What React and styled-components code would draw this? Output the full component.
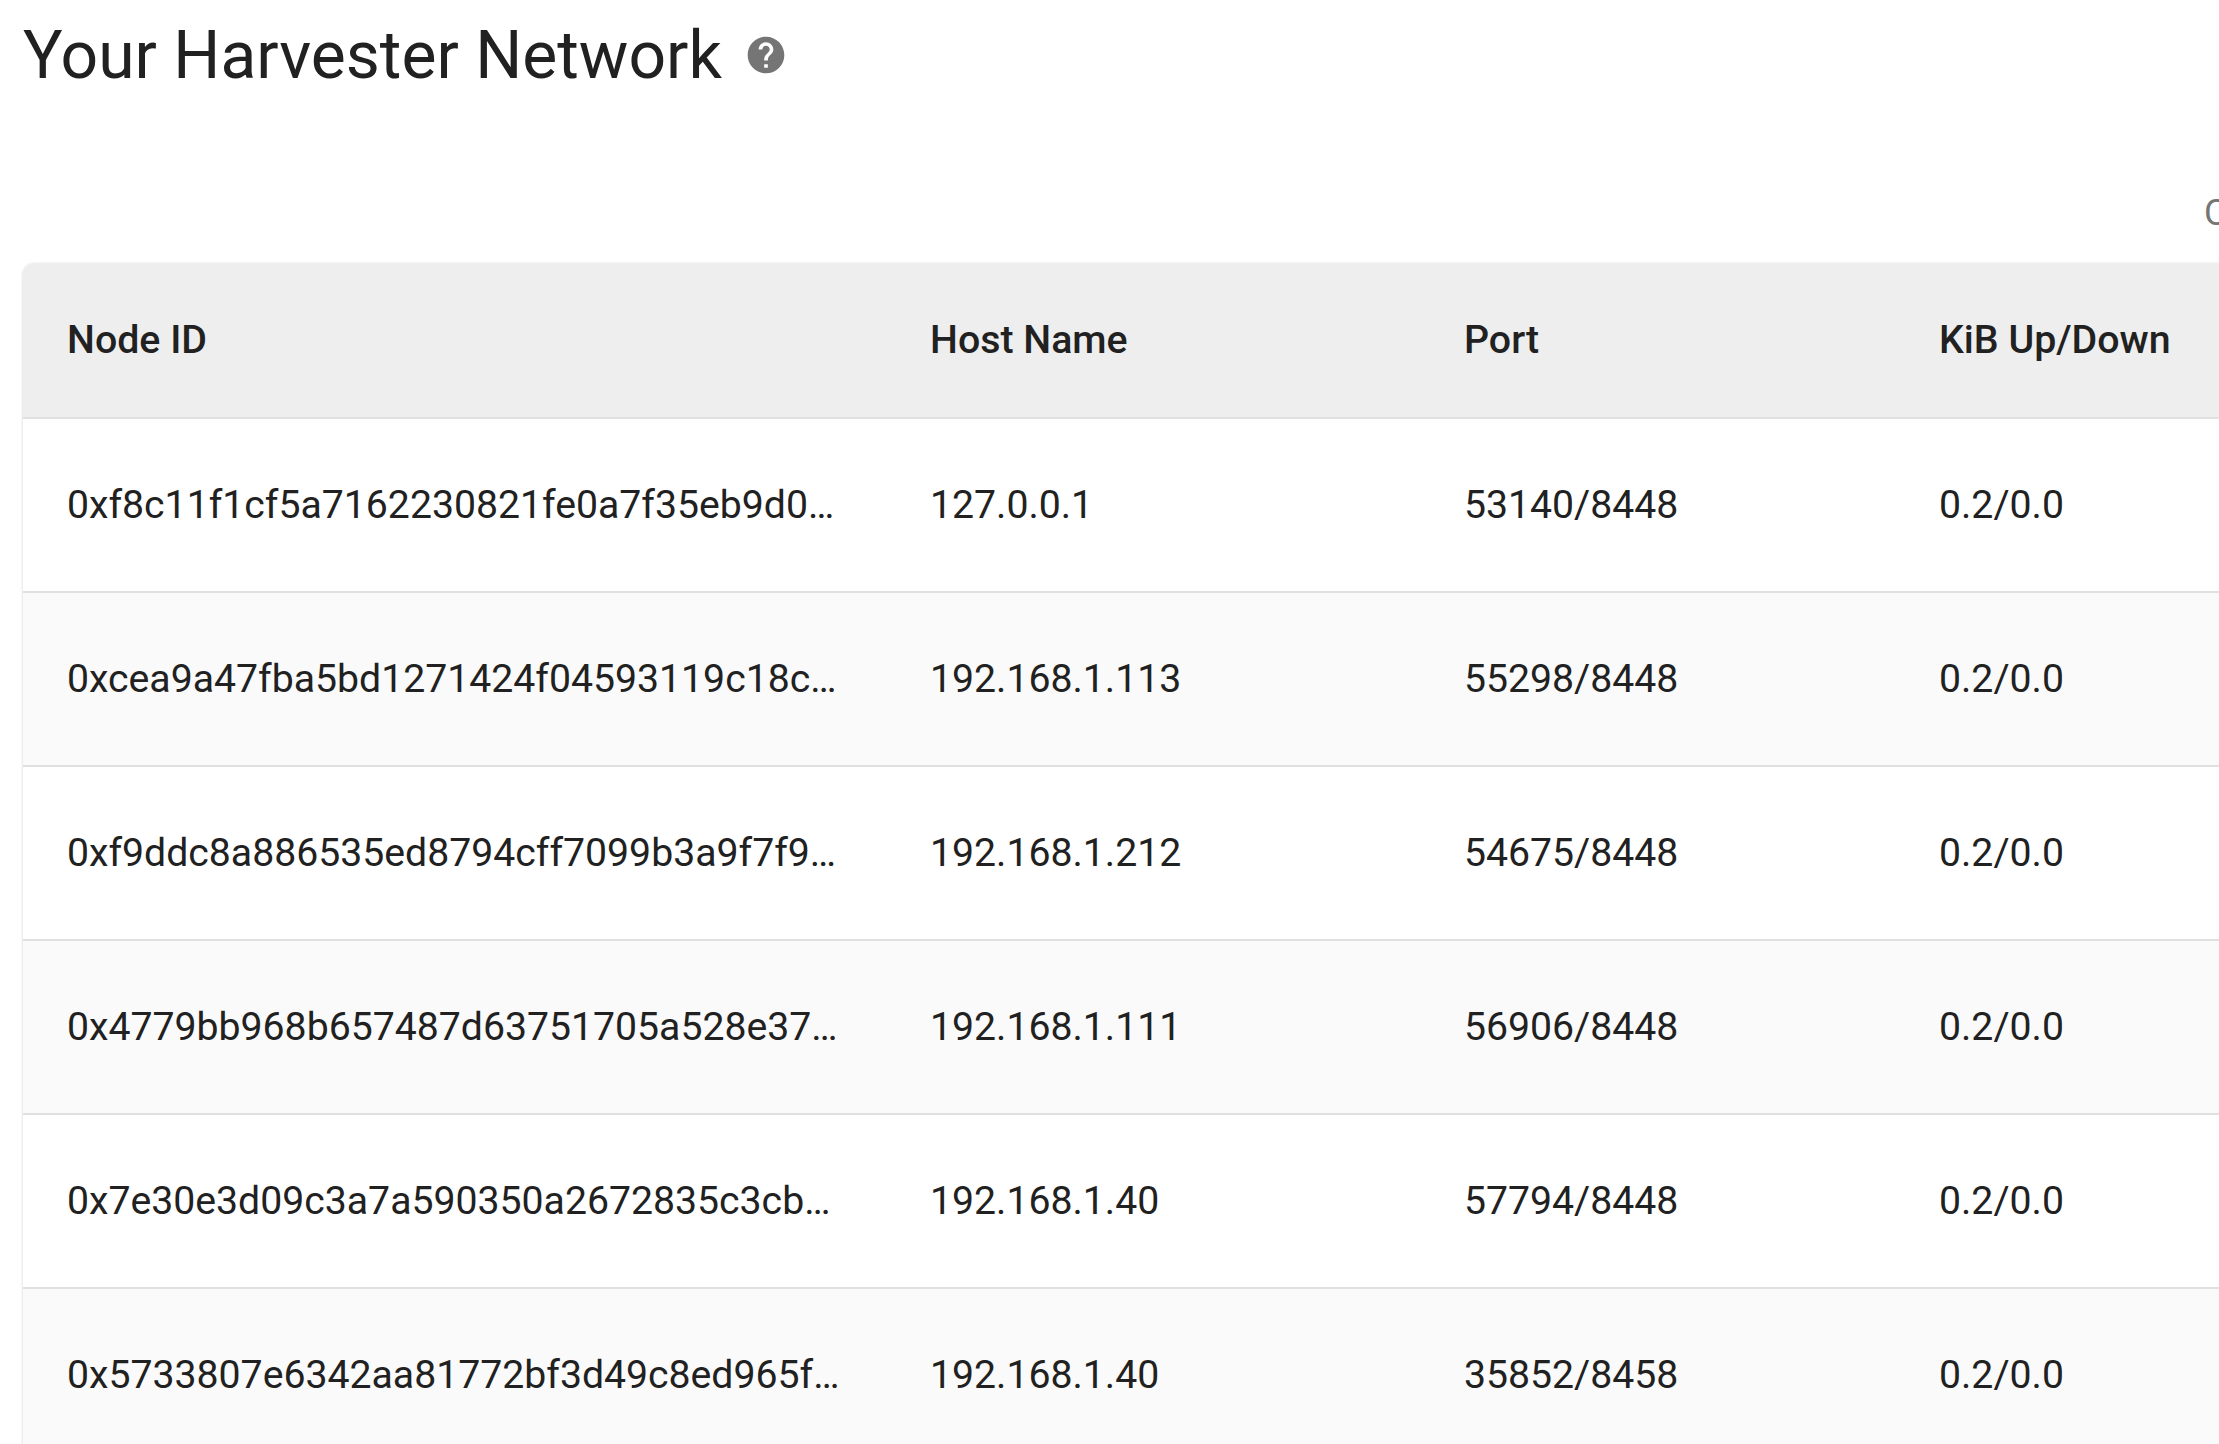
import React from 'react'
import styled, { createGlobalStyle } from 'styled-components'
import { MdHelp } from 'react-icons/md'

const connections = [
  { id: '0xf8c11f1cf5a7162230821fe0a7f35eb9d0…', host: '127.0.0.1', port: '53140/8448', kib: '0.2/0.0' },
  { id: '0xcea9a47fba5bd1271424f04593119c18c…', host: '192.168.1.113', port: '55298/8448', kib: '0.2/0.0' },
  { id: '0xf9ddc8a886535ed8794cff7099b3a9f7f9…', host: '192.168.1.212', port: '54675/8448', kib: '0.2/0.0' },
  { id: '0x4779bb968b657487d63751705a528e37…', host: '192.168.1.111', port: '56906/8448', kib: '0.2/0.0' },
  { id: '0x7e30e3d09c3a7a590350a2672835c3cb…', host: '192.168.1.40', port: '57794/8448', kib: '0.2/0.0' },
  { id: '0x5733807e6342aa81772bf3d49c8ed965f…', host: '192.168.1.40', port: '35852/8458', kib: '0.2/0.0' },
]

const App = () => {
  return (
    <Page>
      <GlobalStyle />
      <TitleRow>
        <Title>Your Harvester Network</Title>
        <HelpIcon />
      </TitleRow>
      <ActionRow>
        <ConnectLink>Connect to other peers</ConnectLink>
      </ActionRow>
      <Table>
        <HeadRow>
          <HeadCell>Node ID</HeadCell>
          <HeadCell>Host Name</HeadCell>
          <HeadCell>Port</HeadCell>
          <HeadCell>KiB Up/Down</HeadCell>
        </HeadRow>
        {connections.map((row, i) => (
          <Row key={row.id} $striped={i % 2 === 1}>
            <Cell>{row.id}</Cell>
            <Cell>{row.host}</Cell>
            <Cell>{row.port}</Cell>
            <Cell>{row.kib}</Cell>
          </Row>
        ))}
      </Table>
    </Page>
  )
}

const GlobalStyle = createGlobalStyle`
  html, body {
    margin: 0;
    background: #fff;
    overflow: hidden;
  }
`

const Page = styled.div`
  width: 2219px;
  height: 1444px;
  padding-left: 23px;
  box-sizing: border-box;
  overflow: hidden;
  font-family: Roboto, "Liberation Sans", sans-serif;
  color: #212121;
`

const TitleRow = styled.div`
  display: flex;
  align-items: center;
  height: 110px;
`

const Title = styled.h1`
  margin: 0;
  padding-top: 2px;
  font-size: 66px;
  font-weight: 400;
  line-height: 110px;
  white-space: nowrap;
`

const HelpIcon = styled(MdHelp)`
  width: 44px;
  height: 44px;
  margin-left: 22px;
  color: #757575;
`

const ActionRow = styled.div`
  display: flex;
  height: 153px;
  padding: 54px 0 0 2181px;
  box-sizing: border-box;
`

const ConnectLink = styled.span`
  font-size: 36px;
  line-height: 99px;
  color: #757575;
  white-space: nowrap;
`

const Table = styled.div`
  width: 2600px;
  border-radius: 11px 0 0 0;
  box-shadow: 0 1px 3px rgba(0, 0, 0, 0.2);
  background: #fff;
`

const HeadRow = styled.div`
  display: grid;
  grid-template-columns: 863px 534px 475px 1fr;
  align-items: center;
  height: 156px;
  box-sizing: border-box;
  background: #eeeeee;
  border-bottom: 2px solid #e0e0e0;
  border-radius: 11px 0 0 0;
`

const Row = styled.div`
  display: grid;
  grid-template-columns: 863px 534px 475px 1fr;
  align-items: center;
  height: 174px;
  box-sizing: border-box;
  background: ${({ $striped }) => ($striped ? '#fafafa' : '#fff')};
  border-bottom: 2px solid #e0e0e0;
`

const HeadCell = styled.div`
  padding: 0 0 1px 44px;
  font-size: 39.3px;
  font-weight: 500;
  white-space: nowrap;
`

const Cell = styled.div`
  padding-left: 44px;
  font-size: 39.2px;
  white-space: nowrap;
`

export default App
